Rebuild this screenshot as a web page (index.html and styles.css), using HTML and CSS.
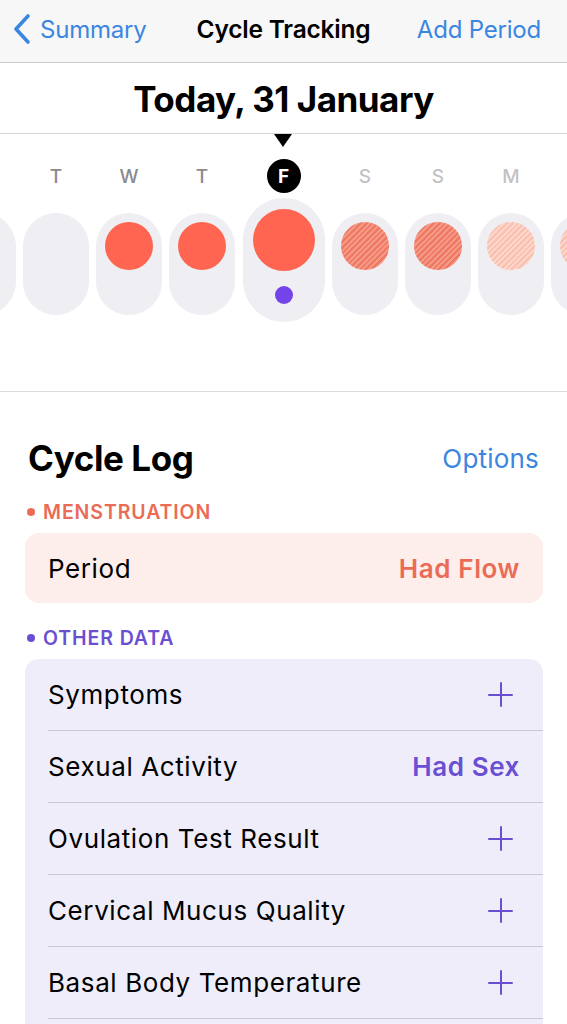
FILE: index.html
```html
<!DOCTYPE html>
<html>
<head>
<meta charset="utf-8">
<link rel="stylesheet" href="styles.css">
</head>
<body>
<div class="nav">
  <div class="nav-left">
    <svg class="chev" width="20" height="32" viewBox="0 0 20 32"><path d="M16 3 L4 16 L16 29" fill="none" stroke="#3b86e0" stroke-width="3.6" stroke-linecap="round" stroke-linejoin="round"/></svg>
    <span class="link">Summary</span>
  </div>
  <div class="nav-title">Cycle Tracking</div>
  <div class="link nav-right">Add Period</div>
</div>
<div class="date-head">Today, 31 January</div>
<div class="strip">
  <div class="pointer"></div>
  <div class="days">
    <div class="col"><div class="letter"></div><div class="pill"></div></div>
    <div class="col"><div class="letter">T</div><div class="pill"></div></div>
    <div class="col"><div class="letter">W</div><div class="pill"><div class="dot solid"></div></div></div>
    <div class="col"><div class="letter">T</div><div class="pill"><div class="dot solid"></div></div></div>
    <div class="col sel"><div class="letter"><span class="today">F</span></div><div class="pill big"><div class="dot solid bigdot"></div><div class="sex"></div></div></div>
    <div class="col"><div class="letter future">S</div><div class="pill"><div class="dot striped"></div></div></div>
    <div class="col"><div class="letter future">S</div><div class="pill"><div class="dot striped"></div></div></div>
    <div class="col"><div class="letter future">M</div><div class="pill"><div class="dot striped light"></div></div></div>
    <div class="col"><div class="letter future"></div><div class="pill"><div class="dot striped light"></div></div></div>
  </div>
</div>
<div class="log">
  <div class="log-head">
    <div class="log-title">Cycle Log</div>
    <div class="link options">Options</div>
  </div>
  <div class="sec-label coral first"><span class="bullet"></span>MENSTRUATION</div>
  <div class="card pink">
    <div class="row"><span>Period</span><span class="val coral">Had Flow</span></div>
  </div>
  <div class="sec-label purple"><span class="bullet"></span>OTHER DATA</div>
  <div class="card lav">
    <div class="row sep"><span>Symptoms</span><span class="plus"></span></div>
    <div class="row sep"><span>Sexual Activity</span><span class="val purple">Had Sex</span></div>
    <div class="row sep"><span>Ovulation Test Result</span><span class="plus"></span></div>
    <div class="row sep"><span>Cervical Mucus Quality</span><span class="plus"></span></div>
    <div class="row sep"><span>Basal Body Temperature</span><span class="plus"></span></div>
  </div>
</div>
</body>
</html>
```
FILE: styles.css
```css
* { box-sizing: border-box; }
html, body { margin: 0; padding: 0; }
body {
  width: 567px;
  height: 1024px;
  overflow: hidden;
  background: #fff;
  font-family: Inter, "Noto Sans", "Liberation Sans", sans-serif;
  color: #000;
}
.nav {
  height: 63px;
  background: #f7f7f7;
  border-bottom: 1px solid #c9c9cb;
  display: flex;
  align-items: center;
  justify-content: space-between;
  padding: 0 26px 4px 12px;
  position: relative;
}
.nav-left { display: flex; align-items: center; gap: 8px; }
.chev { display: block; }
.link { color: #3b86e0; font-size: 24px; letter-spacing: -0.2px; }
.nav-title {
  position: absolute;
  left: 0; right: 0; top: 14px;
  text-align: center;
  font-size: 24.5px;
  font-weight: 600;
  letter-spacing: -0.2px;
  pointer-events: none;
}
.date-head {
  height: 71px;
  border-bottom: 1px solid #d6d6d8;
  display: flex;
  align-items: center;
  justify-content: center;
  font-size: 35px;
  font-weight: 700;
  letter-spacing: -0.5px;
  padding-top: 2px;
}
.strip {
  height: 258px;
  border-bottom: 1px solid #dcdcde;
  position: relative;
  overflow: hidden;
}
.pointer {
  position: absolute;
  left: 274px;
  top: 0;
  width: 0; height: 0;
  border-left: 9.5px solid transparent;
  border-right: 9.5px solid transparent;
  border-top: 13px solid #000;
}
.days {
  display: flex;
  justify-content: center;
  gap: 7px;
  padding-top: 25px;
}
.col {
  flex: 0 0 66px;
  display: flex;
  flex-direction: column;
  align-items: center;
}
.col.sel { flex-basis: 82px; margin: 0 0.5px; }
.letter {
  height: 34px;
  display: flex;
  align-items: center;
  justify-content: center;
  font-size: 19px;
  font-weight: 500;
  color: #8a8a8e;
}
.letter.future { color: #c2c2c6; }
.today {
  width: 34px; height: 34px;
  border-radius: 50%;
  background: #000;
  color: #fff;
  font-weight: 700;
  display: flex;
  align-items: center;
  justify-content: center;
  font-size: 19px;
}
.pill {
  width: 66px;
  height: 102px;
  margin-top: 20px;
  border-radius: 33px;
  background: #eeeef3;
  display: flex;
  flex-direction: column;
  align-items: center;
  padding-top: 9px;
}
.pill.big {
  width: 82px;
  height: 124px;
  margin-top: 5px;
  border-radius: 41px;
  padding-top: 11px;
}
.dot {
  width: 48px; height: 48px;
  border-radius: 50%;
}
.solid { background: #ff6550; }
.bigdot { width: 62px; height: 62px; }
.striped {
  background: repeating-linear-gradient(135deg, #f59886 0 2px, #ee7862 2px 4px);
}
.striped.light {
  background: repeating-linear-gradient(135deg, #fdd5ca 0 2px, #f9bfaf 2px 4px);
}
.sex {
  width: 18px; height: 18px;
  border-radius: 50%;
  background: #7443ea;
  margin-top: 15px;
}
.log { padding: 42px 24px 0 25px; }
.log-head {
  display: flex;
  justify-content: space-between;
  align-items: center;
  padding: 0 4px 0 3px;
  height: 48px;
}
.log-title { font-size: 35px; font-weight: 700; letter-spacing: -0.4px; }
.options { font-size: 26px; letter-spacing: 0.2px; }
.sec-label {
  display: flex;
  align-items: center;
  font-size: 19.5px;
  font-weight: 600;
  letter-spacing: 0.9px;
  margin: 17px 0 0 2px;
  height: 26px;
}
.bullet {
  width: 8px; height: 8px;
  border-radius: 50%;
  background: currentColor;
  margin-right: 8px;
}
.coral { color: #ea6c57; }
.purple { color: #6b4fd3; }
.card {
  margin-top: 8px;
  border-radius: 14px;
  overflow: hidden;
}
.pink { background: #fdeeec; }
.lav { background: #efedfa; padding-bottom: 40px; }
.sec-label.purple { margin-top: 22px; }
.row {
  height: 70px;
  display: flex;
  align-items: center;
  justify-content: space-between;
  padding: 0 23px 0 23px;
  font-size: 26px;
  letter-spacing: 0.6px;
}
.row.sep {
  height: 72px;
  margin-left: 23px;
  padding-left: 0;
  border-bottom: 1px solid #cac8d8;
}
.val { font-weight: 600; }
.plus {
  width: 25px; height: 25px;
  position: relative;
  margin-right: 7px;
}
.plus::before, .plus::after {
  content: "";
  position: absolute;
  background: #6b4fd3;
  border-radius: 1px;
}
.plus::before { left: 0; right: 0; top: 11.5px; height: 2px; }
.plus::after { top: 0; bottom: 0; left: 11.5px; width: 2px; }
```
